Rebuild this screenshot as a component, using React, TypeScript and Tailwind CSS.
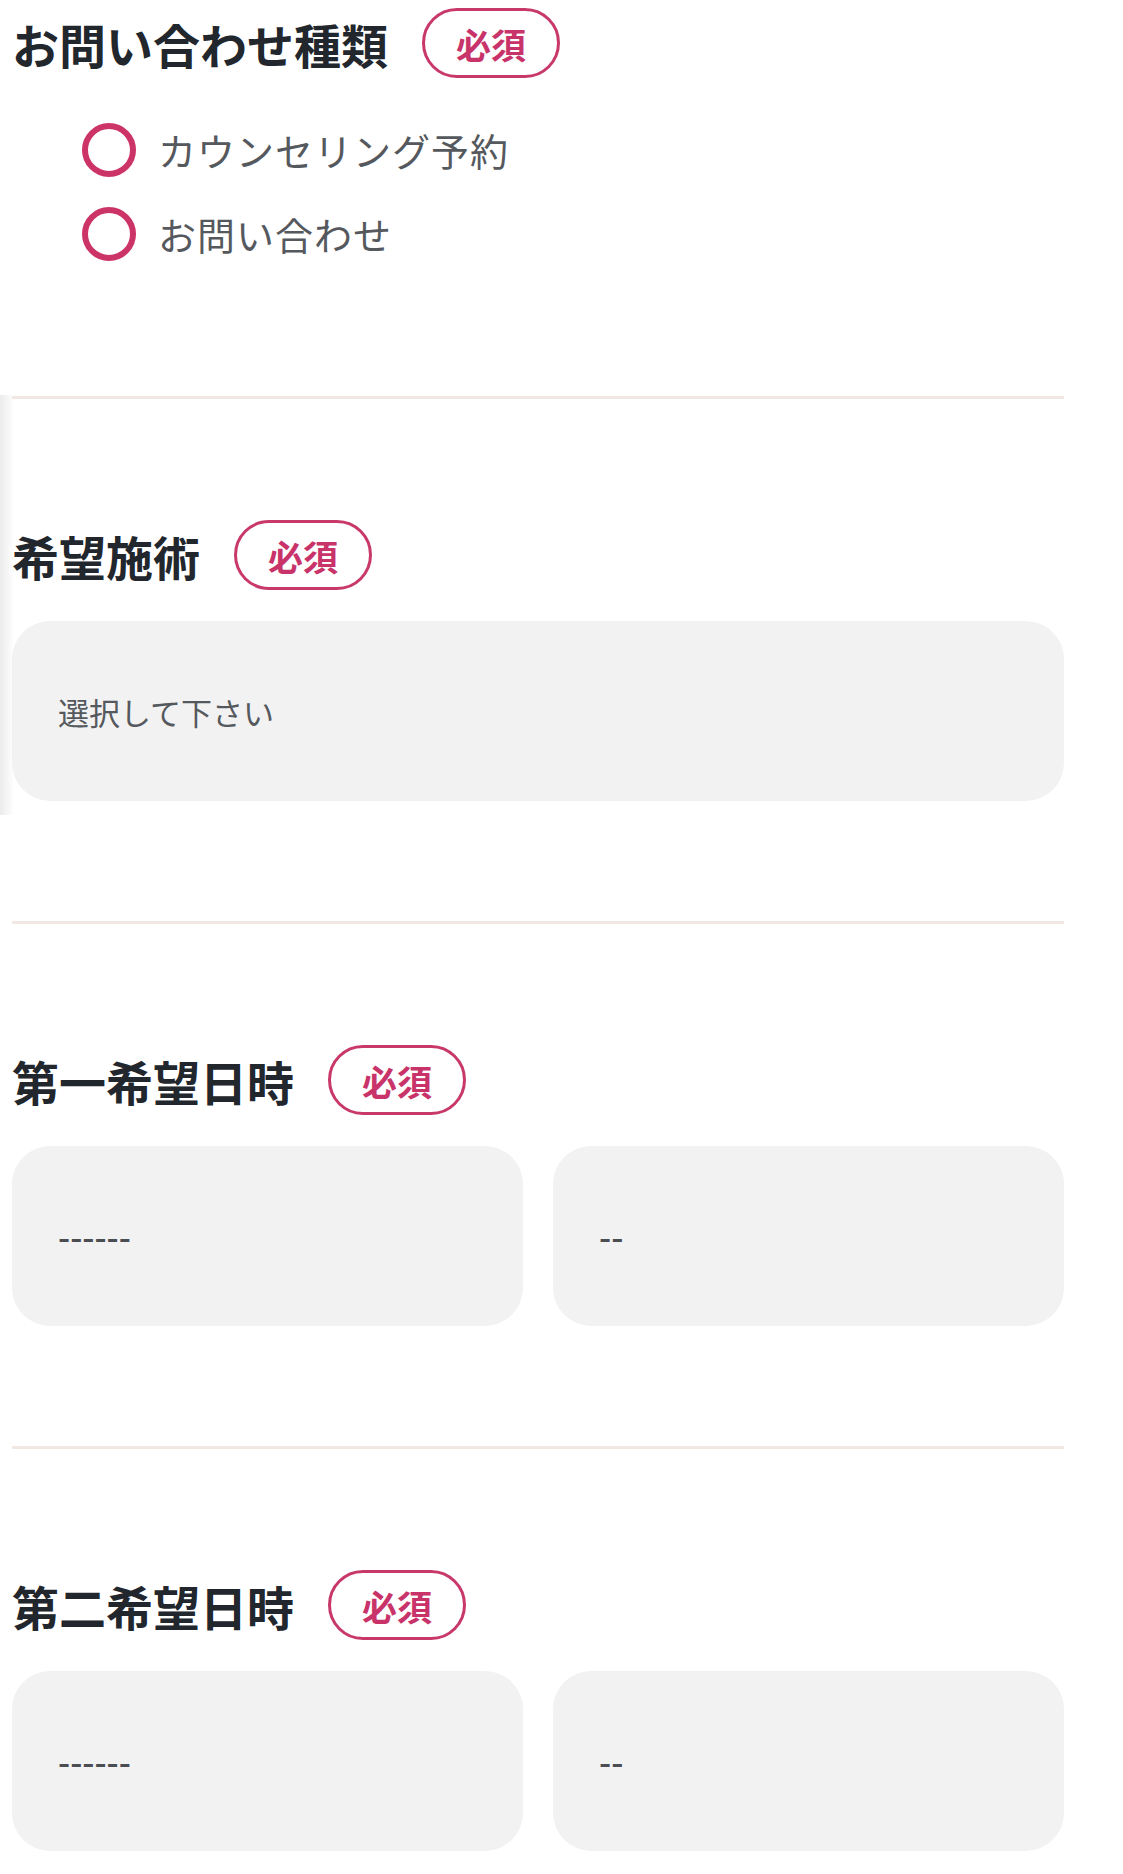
import React from "react";

function Required() {
  return (
    <span className="flex h-[70px] w-[138px] shrink-0 items-center justify-center rounded-full border-[3px] border-[#c8386b] text-[35px] font-bold leading-none text-[#c8336a]">
      必須
    </span>
  );
}

function FieldLabel({ title }: { title: string }) {
  return (
    <div className="flex h-[70px] items-center gap-[34px]">
      <h2 className="text-[47px] font-bold leading-none text-[#22262d]">{title}</h2>
      <Required />
    </div>
  );
}

function Radio({ label }: { label: string }) {
  return (
    <label className="flex h-[84px] items-center pl-[70px]">
      <span className="h-[54px] w-[54px] rounded-full border-[6px] border-[#cc3366]" />
      <span className="ml-[22px] text-[38px] leading-none tracking-[1px] text-[#55595e]">{label}</span>
    </label>
  );
}

function Box({ text, dashes }: { text: string; dashes?: boolean }) {
  return (
    <div
      className={
        dashes
          ? "flex h-[180px] items-center rounded-[38px] bg-[#f2f2f2] pl-[46px] text-[34px] font-medium leading-none text-[#4a4d52]"
          : "flex h-[180px] items-center rounded-[38px] bg-[#f2f2f2] pl-[46px] text-[31px] leading-none text-[#55595e]"
      }
    >
      {text}
    </div>
  );
}

function DateRow() {
  return (
    <div className="mt-[31px] grid grid-cols-2 gap-[30px]">
      <Box text="------" dashes />
      <Box text="--" dashes />
    </div>
  );
}

export default function App() {
  const sections = [
    { title: "第一希望日時" },
    { title: "第二希望日時" },
  ];

  return (
    <div className="relative min-h-[1874px] bg-white font-['Noto_Sans_CJK_JP','Noto_Sans',sans-serif]">
      <div className="pointer-events-none absolute left-0 top-[395px] h-[420px] w-[14px] bg-linear-to-r from-[#ebebeb] to-transparent" />
      <div className="ml-[12px] w-[1052px]">
        <section className="border-b-[3px] border-[#f1e8e4] pt-[8px] pb-[120px]">
          <FieldLabel title="お問い合わせ種類" />
          <div className="mt-[30px]">
            <Radio label="カウンセリング予約" />
            <Radio label="お問い合わせ" />
          </div>
        </section>

        <section className="border-b-[3px] border-[#f1e8e4] pt-[121px] pb-[120px]">
          <FieldLabel title="希望施術" />
          <div className="mt-[31px]">
            <Box text="選択して下さい" />
          </div>
        </section>

        {sections.map((s, i) => (
          <section
            key={s.title}
            className={i === 0 ? "border-b-[3px] border-[#f1e8e4] pt-[121px] pb-[120px]" : "pt-[121px]"}
          >
            <FieldLabel title={s.title} />
            <DateRow />
          </section>
        ))}
      </div>
    </div>
  );
}
